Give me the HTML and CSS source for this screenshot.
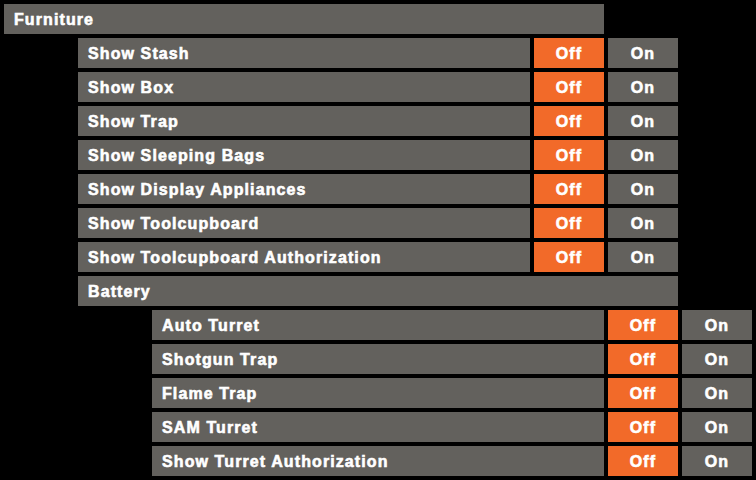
FILE: index.html
```html
<!DOCTYPE html>
<html>
<head>
<meta charset="utf-8">
<link rel="stylesheet" href="styles.css">
</head>
<body>
<div class="group">
  <div class="header">Furniture</div>
  <div class="children">
    <div class="row"><div class="label">Show Stash</div><div class="btn off">Off</div><div class="btn on">On</div></div>
    <div class="row"><div class="label">Show Box</div><div class="btn off">Off</div><div class="btn on">On</div></div>
    <div class="row"><div class="label">Show Trap</div><div class="btn off">Off</div><div class="btn on">On</div></div>
    <div class="row"><div class="label">Show Sleeping Bags</div><div class="btn off">Off</div><div class="btn on">On</div></div>
    <div class="row"><div class="label">Show Display Appliances</div><div class="btn off">Off</div><div class="btn on">On</div></div>
    <div class="row"><div class="label">Show Toolcupboard</div><div class="btn off">Off</div><div class="btn on">On</div></div>
    <div class="row"><div class="label">Show Toolcupboard Authorization</div><div class="btn off">Off</div><div class="btn on">On</div></div>
    <div class="group">
      <div class="header">Battery</div>
      <div class="children">
        <div class="row"><div class="label">Auto Turret</div><div class="btn off">Off</div><div class="btn on">On</div></div>
        <div class="row"><div class="label">Shotgun Trap</div><div class="btn off">Off</div><div class="btn on">On</div></div>
        <div class="row"><div class="label">Flame Trap</div><div class="btn off">Off</div><div class="btn on">On</div></div>
        <div class="row"><div class="label">SAM Turret</div><div class="btn off">Off</div><div class="btn on">On</div></div>
        <div class="row"><div class="label">Show Turret Authorization</div><div class="btn off">Off</div><div class="btn on">On</div></div>
      </div>
    </div>
  </div>
</div>
</body>
</html>
```
FILE: styles.css
```css
html, body {
  margin: 0;
  padding: 0;
  background: #000;
}
body {
  padding: 4px;
  font-family: "Liberation Sans", Arial, sans-serif;
  font-weight: bold;
  font-size: 16px;
  letter-spacing: 1.1px;
  -webkit-text-stroke: 0.6px #fff;
  color: #fff;
}
.group {
  display: flex;
  flex-direction: column;
  gap: 4px;
  width: 600px;
}
.children {
  display: flex;
  flex-direction: column;
  gap: 4px;
  margin-left: 74px;
  width: 600px;
}
.header, .label {
  background: #63615d;
  height: 30px;
  padding-top: 2px;
  line-height: 28px;
  padding-left: 10px;
  box-sizing: border-box;
  white-space: nowrap;
}
.row {
  display: flex;
  gap: 4px;
  height: 30px;
}
.label {
  flex: 1;
}
.btn {
  width: 70px;
  height: 30px;
  padding-top: 2px;
  line-height: 28px;
  box-sizing: border-box;
  text-align: center;
}
.off {
  background: #f26a29;
}
.on {
  background: #63615d;
}
```
